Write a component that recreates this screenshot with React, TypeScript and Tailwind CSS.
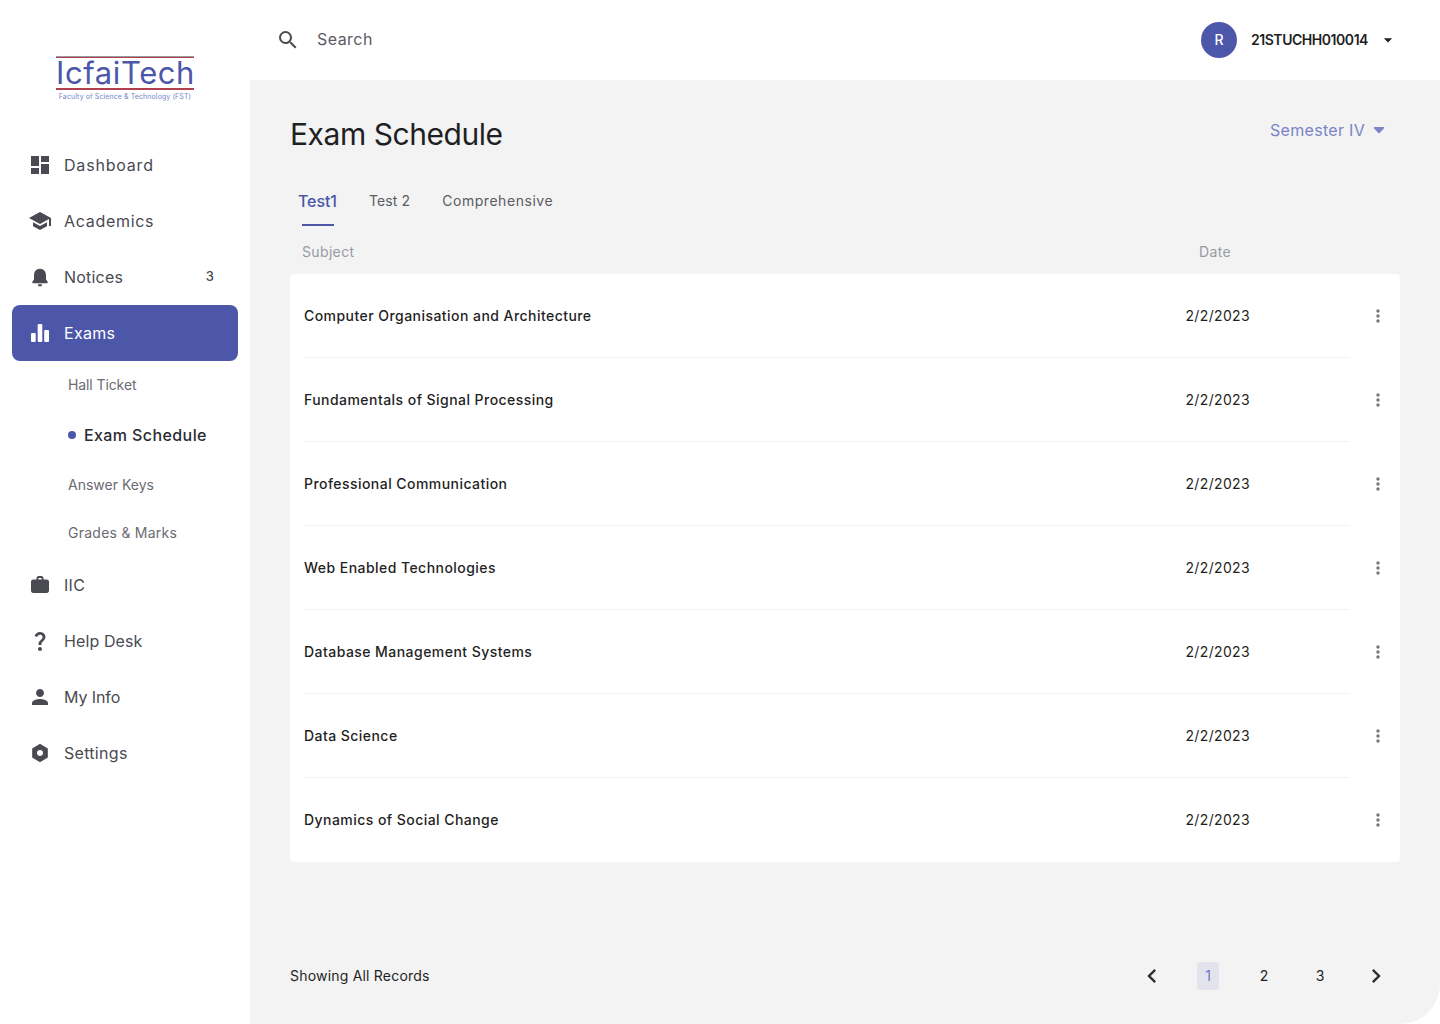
import {
  MdDashboard,
  MdSchool,
  MdQuestionMark,
  MdPerson,
  MdSearch,
  MdArrowDropDown,
  MdMoreVert,
  MdChevronLeft,
  MdChevronRight,
} from "react-icons/md";

const FONT = "font-['Inter','Noto_Sans',sans-serif]";

const subjects = [
  "Computer Organisation and Architecture",
  "Fundamentals of Signal Processing",
  "Professional Communication",
  "Web Enabled Technologies",
  "Database Management Systems",
  "Data Science",
  "Dynamics of Social Change",
];

function BarsIcon() {
  return (
    <svg viewBox="0 0 24 24" className="h-6 w-6" fill="currentColor">
      <rect x="3" y="12" width="4.7" height="9" rx="1" />
      <rect x="9.7" y="3" width="4.6" height="18" rx="1.2" />
      <rect x="16.2" y="9" width="4.8" height="12" rx="1" />
    </svg>
  );
}

function BellIcon() {
  return (
    <svg viewBox="0 0 24 24" className="h-6 w-6" fill="currentColor">
      <path d="M12 3.8c-3.6 0-6 2.8-6 6.5v4.2l-1.6 2.2c-.5.7 0 1.6.8 1.6h13.6c.8 0 1.3-.9.8-1.6L18 14.500v-4.200c0-3.700-2.400-6.500-6-6.500z" />
      <path d="M9.800 19.300h4.400a2.200 2.200 0 01-4.400 0z" />
    </svg>
  );
}

function CaseIcon() {
  return (
    <svg viewBox="0 0 24 24" className="h-6 w-6" fill="currentColor">
      <path
        fillRule="evenodd"
        d="M8.500 6.500V5.200c0-1.200.9-2.200 2.100-2.200h2.800c1.200 0 2.100 1 2.100 2.200v1.300h3.300c1.200 0 2.200 1 2.200 2.200v9.100c0 1.200-1 2.200-2.200 2.200H5.200C4 20 3 19 3 17.800V8.700c0-1.200 1-2.200 2.200-2.200h3.300zm1.900 0h3.200V5h-3.200v1.500z"
      />
    </svg>
  );
}

function HexIcon() {
  return (
    <svg viewBox="0 0 24 24" className="h-6 w-6" fill="currentColor" stroke="currentColor" strokeWidth="1.200" strokeLinejoin="round">
      <path
        fillRule="evenodd"
        d="M12 3.600l7.200 4.100v8.600L12 20.400l-7.200-4.100V7.700L12 3.600zM12 8.400a3.600 3.600 0 100 7.200 3.600 3.600 0 000-7.200z"
      />
    </svg>
  );
}

function NavItem({
  icon,
  label,
  badge,
  active,
  labelClass = "tracking-[0.3px]",
}: {
  icon: React.ReactNode;
  label: string;
  badge?: string;
  active?: boolean;
  labelClass?: string;
}) {
  return (
    <div
      className={`flex h-14 items-center rounded-lg pl-4 pr-6 ${
        active ? "bg-[#4c57a9] text-white" : "text-[#4a4a52]"
      }`}
    >
      <span className="flex w-6 justify-center text-2xl">{icon}</span>
      <span className={`ml-3 flex-1 text-base ${labelClass}`}>{label}</span>
      {badge && <span className="text-[13px] font-medium">{badge}</span>}
    </div>
  );
}

function SubItem({
  label,
  active,
  h,
  labelClass,
}: {
  label: string;
  active?: boolean;
  h: string;
  labelClass: string;
}) {
  return (
    <div className={`flex items-center pl-14 ${h}`}>
      {active && <span className="mr-2 h-2 w-2 rounded-full bg-[#4c57a9]" />}
      <span
        className={`${labelClass} ${
          active ? "text-base font-medium text-[#2b2b33]" : "text-sm text-[#6b6b73]"
        }`}
      >
        {label}
      </span>
    </div>
  );
}

function Logo() {
  return (
    <div className="mx-auto flex w-[138px] flex-col">
      <div className="h-[2px] border-t border-[#9a9aa3] bg-[#b0404e]" />
      <div className="text-center text-[31px] leading-[30px] font-normal tracking-[0.6px] text-[#4c57a9]">
        IcfaiTech
      </div>
      <div className="h-[2px] bg-[#b0404e]" />
      <div className="mt-[2px] text-center text-[7px] leading-[10px] tracking-[0.1px] whitespace-nowrap text-[#7a84c8]">
        Faculty of Science &amp; Technology (FST)
      </div>
    </div>
  );
}

function Sidebar() {
  return (
    <aside className="flex w-[250px] shrink-0 flex-col bg-white px-3">
      <div className="pt-[56px] pb-[35px]">
        <Logo />
      </div>
      <NavItem icon={<MdDashboard />} label="Dashboard" labelClass="tracking-[0.8px]" />
      <NavItem icon={<MdSchool />} label="Academics" labelClass="tracking-[0.7px]" />
      <NavItem icon={<BellIcon />} label="Notices" labelClass="tracking-[0.2px]" badge="3" />
      <NavItem icon={<BarsIcon />} label="Exams" active />
      <SubItem label="Hall Ticket" h="h-12" labelClass="tracking-[-0.1px]" />
      <SubItem label="Exam Schedule" active h="h-[52px]" labelClass="tracking-[0.4px]" />
      <SubItem label="Answer Keys" h="h-12" labelClass="tracking-[0px]" />
      <SubItem label="Grades & Marks" h="h-12" labelClass="tracking-[0.25px]" />
      <NavItem icon={<CaseIcon />} label="IIC" />
      <NavItem icon={<MdQuestionMark />} label="Help Desk" labelClass="tracking-[0.1px]" />
      <NavItem icon={<MdPerson />} label="My Info" labelClass="tracking-[-0.1px]" />
      <NavItem icon={<HexIcon />} label="Settings" />
    </aside>
  );
}

function Header() {
  return (
    <header className="flex h-20 shrink-0 items-center bg-white pr-[42px] pl-[26px]">
      <MdSearch className="text-2xl text-[#4a4a52]" />
      <span className="mb-[2px] ml-[17px] flex-1 text-base tracking-[0.45px] text-[#5b5b63]">Search</span>
      <div className="flex h-9 w-9 items-center justify-center rounded-full bg-[#4c57a9] text-sm font-medium text-white">
        R
      </div>
      <span className="ml-[14px] text-sm font-semibold tracking-[-0.45px] text-[#1f1f24]">21STUCHH010014</span>
      <MdArrowDropDown className="ml-[10px] text-xl text-[#1f1f24]" />
    </header>
  );
}

function Row({ name, last }: { name: string; last?: boolean }) {
  return (
    <div className="flex h-[84px] items-center pr-3 pl-[14px]">
      <div className={`flex h-full flex-1 items-center ${last ? "" : "border-b border-[#f2f2f2]"}`}>
        <span className="flex-1 text-sm font-medium tracking-[0.45px] text-[#1f1f24]">{name}</span>
        <span className="mr-[100px] text-sm tracking-[0.35px] text-[#1f1f24]">2/2/2023</span>
      </div>
      <MdMoreVert className="ml-[18px] text-xl text-[#77777f]" />
    </div>
  );
}

function Pagination() {
  return (
    <div className="flex items-center">
      <MdChevronLeft className="text-[28px] text-[#2b2b33]" />
      <span className="ml-[31px] flex h-7 w-[22px] items-center justify-center rounded-sm bg-[#e3e3ee] text-sm text-[#6f78c8]">
        1
      </span>
      <span className="ml-[34px] w-[22px] text-center text-sm text-[#1f1f24]">2</span>
      <span className="ml-[34px] w-[22px] text-center text-sm text-[#1f1f24]">3</span>
      <MdChevronRight className="ml-[31px] text-[28px] text-[#2b2b33]" />
    </div>
  );
}

export default function App() {
  return (
    <div className={`h-[1024px] w-[1440px] overflow-hidden bg-white ${FONT}`}>
      <div className="flex h-full overflow-hidden rounded-[40px]">
        <Sidebar />
        <div className="flex min-w-0 flex-1 flex-col">
          <Header />
          <main className="flex flex-1 flex-col bg-[#f3f3f3] px-[40px]">
            <div className="flex items-start justify-between pt-[34px]">
              <h1 className="text-[30px] leading-10 font-normal tracking-[-0.45px] text-[#1f1f24]">
                Exam Schedule
              </h1>
              <div className="mt-1 flex items-center pr-[15px] text-[#7a84c8]">
                <span className="text-base tracking-[0.3px]">Semester IV</span>
                <svg viewBox="0 0 12 8" className="ml-2 h-2 w-3" fill="currentColor">
                  <path d="M1.500 1h9c.7 0 1 .8.6 1.300L6.600 7a.8.8 0 01-1.200 0L.9 2.300C.5 1.800.8 1 1.500 1z" />
                </svg>
              </div>
            </div>

            <div className="mt-[35px] flex items-start">
              <div className="flex w-[64px] flex-col items-start">
                <span className="pl-2 text-base leading-6 font-medium tracking-[-0.1px] text-[#4c57a9]">Test1</span>
                <span className="mt-[11px] ml-3 h-[2px] w-8 bg-[#4c57a9]" />
              </div>
              <span className="ml-[15px] text-sm leading-6 tracking-[0.1px] text-[#5b5b63]">Test 2</span>
              <span className="ml-8 text-sm leading-6 tracking-[0.55px] text-[#5b5b63]">Comprehensive</span>
            </div>

            <div className="flex h-[48px] items-center pt-1 pr-[169px] pl-3 text-sm tracking-[0.35px] text-[#9a9aa3]">
              <span className="flex-1">Subject</span>
              <span>Date</span>
            </div>

            <section className="rounded bg-white">
              {subjects.map((s, i) => (
                <Row key={s} name={s} last={i === subjects.length - 1} />
              ))}
            </section>

            <div className="mt-auto flex h-[62px] items-start justify-between pr-[10px]">
              <span className="pt-1 text-sm leading-5 tracking-[0.2px] text-[#1f1f24]">Showing All Records</span>
              <Pagination />
            </div>
          </main>
        </div>
      </div>
    </div>
  );
}
